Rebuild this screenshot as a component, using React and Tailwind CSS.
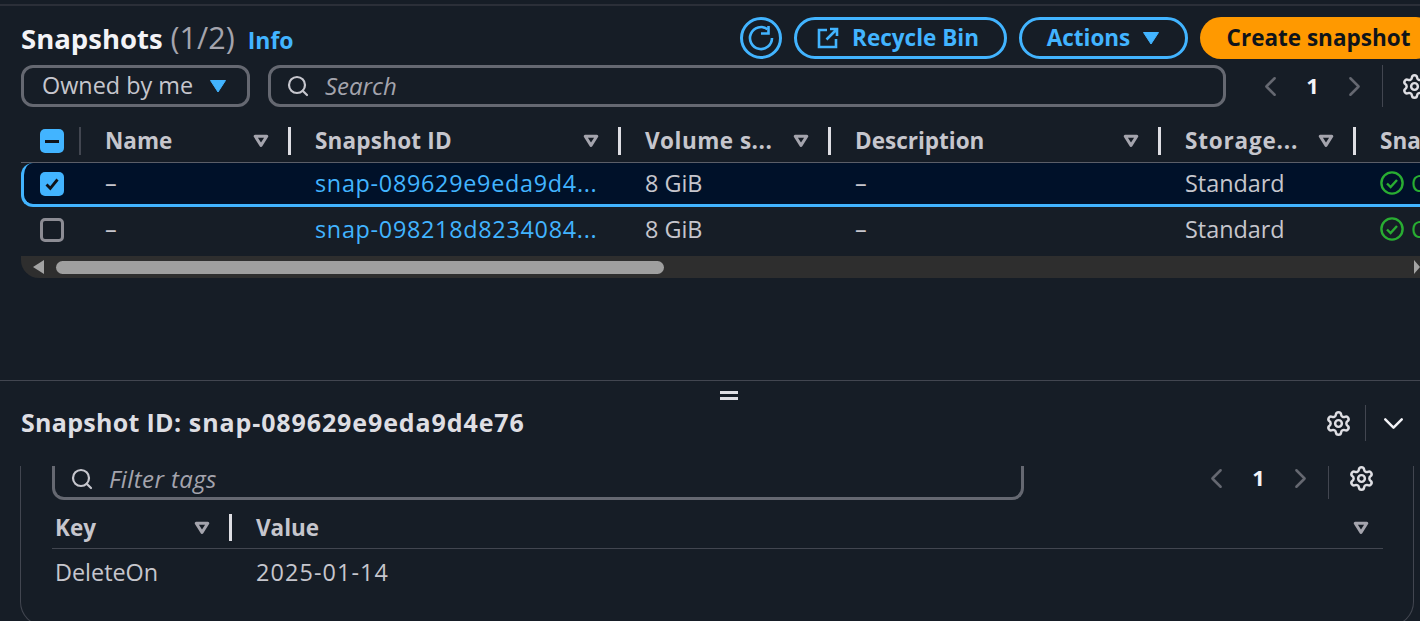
import { ChevronDown, ChevronLeft, ChevronRight, Search, Settings } from 'lucide-react'

const font = { fontFamily: '"Open Sans", sans-serif' }

const SortIcon = () => (
  <svg width="16" height="14" viewBox="0 0 16 14" className="shrink-0">
    <path d="M2.2 2.3h11.6L8 11.4z" fill="none" stroke="#a4a4ad" strokeWidth="3" strokeLinejoin="round" />
  </svg>
)

const Caret = ({ className = '' }) => (
  <svg width="18" height="14" viewBox="0 0 18 14" className={className}>
    <path d="M1.5 1.5h15L9 13z" fill="#42b4ff" stroke="#42b4ff" strokeLinejoin="round" />
  </svg>
)

const StatusIcon = () => (
  <svg width="24" height="24" viewBox="0 0 24 24" className="shrink-0">
    <circle cx="12" cy="12" r="10.6" fill="none" stroke="#29ad32" strokeWidth="2.4" />
    <path d="M7 12.5l3.6 3.6L17 9" fill="none" stroke="#29ad32" strokeWidth="2.4" />
  </svg>
)

const Pager = ({ gear = 'ml-[18px]', span = 'w-[51px]' }) => (
  <div className="flex items-center h-[42px] shrink-0">
    <ChevronLeft size={33} strokeWidth={1.8} color="#656871" />
    <span className={`${span} text-center font-bold text-[22px] text-[#f3f3f7] pb-[2px]`}>1</span>
    <ChevronRight size={33} strokeWidth={1.8} color="#656871" />
    <div className="w-px h-[42px] bg-[#424650] ml-[11px]" />
    <Settings size={27} strokeWidth={2.2} color="#dedee3" className={`shrink-0 ${gear}`} />
  </div>
)

const columns = [
  { label: 'Name', width: 'w-[210px]', text: '' },
  { label: 'Snapshot ID', width: 'w-[330px]', text: 'tracking-[0.2px]' },
  { label: 'Volume s...', width: 'w-[210px]', text: 'tracking-[0.5px]' },
  { label: 'Description', width: 'w-[330px]', text: '' },
  { label: 'Storage...', width: 'w-[195px]', text: 'tracking-[0.8px]' },
]

const rows = [
  { id: 'snap-089629e9eda9d4...', selected: true, height: 'h-[44px]' },
  { id: 'snap-098218d8234084...', selected: false, height: 'h-[45px]' },
]

const Cell = ({ width, children, className = '' }) => (
  <div className={`${width} shrink-0 pl-5 whitespace-nowrap ${className}`}>{children}</div>
)

function App() {
  return (
    <div style={font} className="w-[1420px] h-[621px] overflow-hidden bg-[#161d26] text-[23.4px] text-[#c6c6cd] flex flex-col">
      <div className="h-[6px] shrink-0 border-b-2 border-[#2b2f38] bg-[#161d26]" />

      <div className="w-[1480px] pl-[21px] pt-[11px] flex items-center h-[53px] shrink-0">
        <div className="flex items-baseline flex-1">
          <span className="text-[27.5px] font-bold text-[#f3f3f7]">Snapshots</span>
          <span className="text-[30.5px] text-[#a4a4ad] ml-2">(1/2)</span>
          <span className="text-[23px] font-bold text-[#42b4ff] ml-[13px]">Info</span>
        </div>
        <div className="flex items-center gap-3 mr-[43px] text-[22.5px]">
          <button className="w-[42px] h-[42px] rounded-full border-[3px] border-[#42b4ff] flex items-center justify-center">
            <svg width="28" height="28" viewBox="0 0 28 28">
              <path d="M20.5 5.2A11 11 0 1 0 25 14" fill="none" stroke="#42b4ff" strokeWidth="2.6" />
              <path d="M21.5 2v7.5H14" fill="none" stroke="#42b4ff" strokeWidth="2.6" />
            </svg>
          </button>
          <button className="h-[42px] w-[213px] rounded-full border-[3px] border-[#42b4ff] flex items-center justify-center gap-3 pr-[6px] font-bold text-[#42b4ff]">
            <svg width="24" height="24" viewBox="0 0 24 24">
              <path d="M11 4H3v17h17v-8M14 3h7v7M21 3L10.5 13.5" fill="none" stroke="#42b4ff" strokeWidth="2.6" />
            </svg>
            Recycle Bin
          </button>
          <button className="h-[42px] w-[169px] rounded-full border-[3px] border-[#42b4ff] flex items-center justify-center gap-3 font-bold text-[#42b4ff]">
            Actions
            <Caret />
          </button>
          <button className="h-[42px] w-[237px] rounded-full bg-[#ff9900] flex items-center justify-center font-bold text-[#0f141a]">
            Create snapshot
          </button>
        </div>
      </div>

      <div className="w-[1480px] pl-[21px] pt-[6px] flex items-center shrink-0">
        <div className="w-[229px] h-[42px] rounded-xl border-[3px] border-[#656871] flex items-center justify-between pl-[18px] pr-[20px] text-[#c6c6cd]">
          <span className="pb-[1px]">Owned by me</span>
          <Caret />
        </div>
        <div className="w-[958px] h-[42px] ml-[18px] rounded-xl border-[3px] border-[#656871] flex items-center pl-[15px]">
          <Search size={24} strokeWidth={2.2} color="#c6c6cd" />
          <span className="ml-[15px] pb-[1px] italic text-[#a4a4ad] text-[24px]">Search</span>
        </div>
        <div className="ml-[28px]">
          <Pager />
        </div>
      </div>

      <div className="w-[1480px] pl-[21px] shrink-0 mt-[13px]">
        <div className="flex items-center h-[43px] border-b border-[#5b5e68] font-bold text-[22.5px]">
          <div className="w-[64px] shrink-0 flex items-center pl-[19px]">
            <div className="w-[24px] h-[24px] rounded-[5px] bg-[#42b4ff] flex items-center justify-center">
              <div className="w-[14px] h-[3px] bg-[#0f141a]" />
            </div>
            <div className="w-[2px] h-[28px] ml-[15px] bg-[#424650]" />
          </div>
          {columns.map((col) => (
            <Cell key={col.label} width={col.width} className="flex items-center pr-[4px]">
              <span className={`flex-1 ${col.text}`}>{col.label}</span>
              <SortIcon />
              <div className="w-[3px] h-[28px] bg-[#dedee3] ml-[19px]" />
            </Cell>
          ))}
          <Cell width="w-[100px]">Snapshot</Cell>
        </div>

        {rows.map((row) => (
          <div
            key={row.id}
            className={
              row.selected
                ? `flex items-center ${row.height} bg-[#001129] border-b-[3px] border-l-[3px] border-[#42b4ff] rounded-l-xl`
                : `flex items-center ${row.height}`
            }
          >
            <div className={row.selected ? 'w-[61px] shrink-0 pl-[16px] flex' : 'w-[64px] shrink-0 pl-[19px] flex'}>
              {row.selected ? (
                <div className="w-[24px] h-[24px] rounded-[5px] bg-[#42b4ff] flex items-center justify-center">
                  <svg width="18" height="18" viewBox="0 0 18 18">
                    <path d="M3.5 9.5l3.8 3.8L14.5 4.5" fill="none" stroke="#0f141a" strokeWidth="2.8" />
                  </svg>
                </div>
              ) : (
                <div className="w-[24px] h-[24px] rounded-[5px] border-[3px] border-[#8c8c94]" />
              )}
            </div>
            <Cell width="w-[210px]" className="pt-[1px]">–</Cell>
            <Cell width="w-[330px]" className="pt-[1px] text-[#42b4ff] tracking-[0.7px]">{row.id}</Cell>
            <Cell width="w-[210px]" className="pt-[1px]">8 GiB</Cell>
            <Cell width="w-[330px]" className="pt-[1px]">–</Cell>
            <Cell width="w-[195px]" className="pt-[1px]">Standard</Cell>
            <Cell width="w-[100px]" className="flex items-center gap-[7px] text-[#29ad32]">
              <StatusIcon />
              Completed
            </Cell>
          </div>
        ))}

        <div className="w-[1399px] h-[22px] mt-[4px] bg-[#2e2e2e] rounded-bl-[18px] flex items-center relative">
          <div className="ml-[12px] w-0 h-0 border-y-[7px] border-y-transparent border-r-[11px] border-r-[#a3a3a3]" />
          <div className="ml-[12px] w-[608px] h-[13px] rounded-full bg-[#9f9f9f]" />
          <div className="absolute right-0 w-0 h-0 border-y-[7px] border-y-transparent border-l-[6px] border-l-[#a3a3a3]" />
        </div>
      </div>

      <div className="mt-[102px] shrink-0 border-t border-[#424650] relative">
        <div className="absolute left-[720px] top-[10px] w-[18px] h-[9px] border-y-[3px] border-[#dedee3]" />
        <div className="h-[85px] pl-[21px] pr-[10px] pb-[1px] flex items-center">
          <span className="flex-1 font-bold text-[#dedee3] text-[25px]">
            <span className="tracking-[0.3px]">Snapshot ID:</span> <span className="ml-[1px] tracking-[0.9px]">snap-089629e9eda9d4e76</span>
          </span>
          <Settings size={27} strokeWidth={2.2} color="#dedee3" />
          <div className="w-px h-[36px] bg-[#424650] ml-[13px] mr-[11px]" />
          <ChevronDown size={33} strokeWidth={1.8} color="#f3f3f7" />
        </div>
      </div>

      <div className="ml-[20px] w-[1394px] h-[160px] shrink-0 border-x border-b border-[#424650] rounded-b-[24px] pl-[31px] pr-[30px]">
        <div className="flex items-start h-[34px] overflow-hidden">
          <div className="w-[972px] h-[34px] shrink-0 rounded-b-xl border-[3px] border-t-0 border-[#656871] flex items-center pl-[15px] pb-[6px]">
            <Search size={24} strokeWidth={2.2} color="#c6c6cd" />
            <span className="ml-[15px] italic text-[#a4a4ad] text-[24px] tracking-[0.4px]">Filter tags</span>
          </div>
          <div className="ml-[176px] -mt-[9px]">
            <Pager gear="ml-[19px]" />
          </div>
        </div>
        <div className="flex items-center h-[49px] pt-[7px] border-b border-[#424650] font-bold text-[22.5px]">
          <div className="w-[177px] pl-[3px] flex items-center shrink-0">
            <span className="flex-1">Key</span>
            <SortIcon />
            <div className="w-[3px] h-[27px] bg-[#dedee3] ml-[19px] -mr-[3px]" />
          </div>
          <span className="ml-[27px] flex-1">Value</span>
          <div className="mr-[14px]"><SortIcon /></div>
        </div>
        <div className="flex items-center h-[47px]">
          <span className="w-[204px] pl-[3px] shrink-0">DeleteOn</span>
          <span className="tracking-[1.1px]">2025-01-14</span>
        </div>
      </div>
    </div>
  )
}

export default App
